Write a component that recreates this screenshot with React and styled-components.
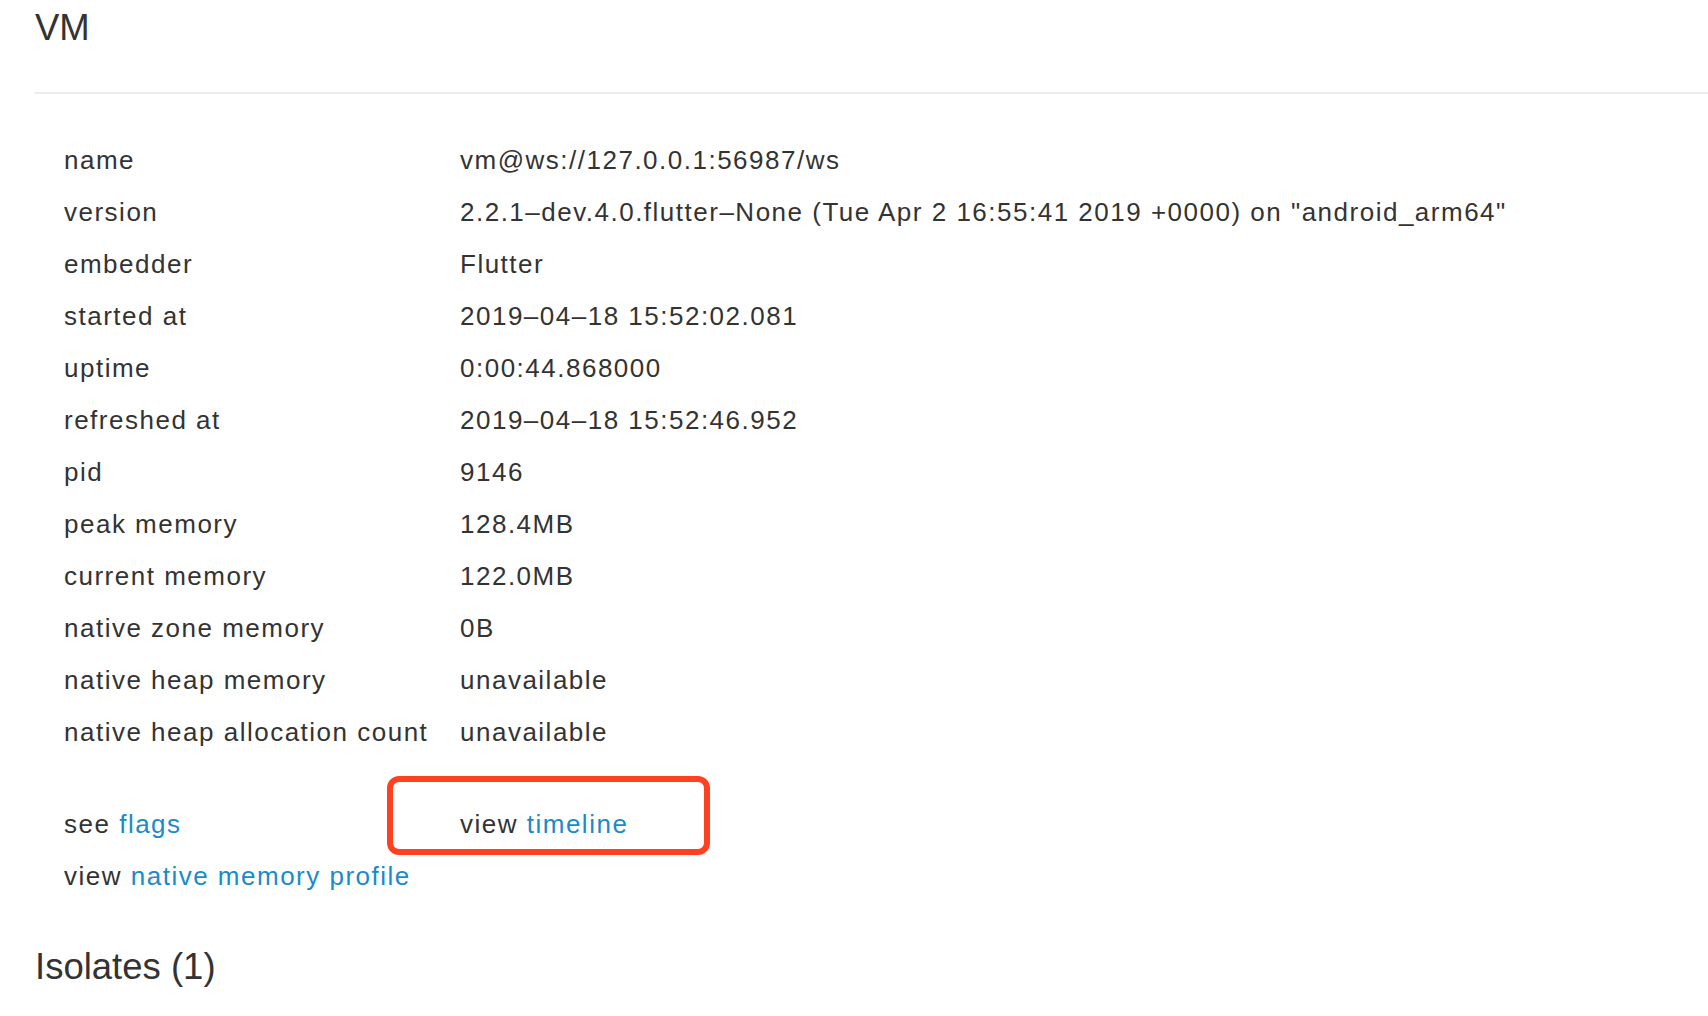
import React from "react";
import styled, { createGlobalStyle } from "styled-components";

const GlobalStyle = createGlobalStyle`
  html, body {
    margin: 0;
    padding: 0;
    background: #ffffff;
  }
  body {
    font-family: "Liberation Sans", Arial, sans-serif;
    color: #333333;
  }
`;

const Page = styled.div`
  padding: 10px 0 40px 35px;
`;

const Heading = styled.h1`
  margin: 0;
  font-size: 36.5px;
  line-height: 36px;
  font-weight: 400;
  color: #333333;
`;

const Rule = styled.hr`
  margin: ${(p) => p.$top}px 0 ${(p) => p.$bottom}px 0;
  border: 0;
  height: 2px;
  background: #ececec;
`;

const InfoGrid = styled.div`
  display: grid;
  grid-template-columns: 396px 1fr;
  padding-left: 29px;
  margin-top: ${(p) => p.$top || 0}px;
  font-size: 26px;
  letter-spacing: 1.5px;
  line-height: 52px;
`;

const Cell = styled.div`
  position: relative;
  white-space: nowrap;
  height: 52px;
`;

const Link = styled.a`
  color: #1a8bc9;
  text-decoration: none;
  cursor: pointer;
`;

const Highlight = styled.div`
  position: absolute;
  left: -73px;
  top: -22px;
  width: 323px;
  height: 79px;
  box-sizing: border-box;
  border: 6px solid #ff4120;
  border-radius: 12px;
  pointer-events: none;
`;

const SubHeading = styled(Heading)`
  margin-top: 47px;
`;

const rows = [
  ["name", "vm@ws://127.0.0.1:56987/ws"],
  [
    "version",
    '2.2.1\u2013dev.4.0.flutter\u2013None (Tue Apr 2 16:55:41 2019 +0000) on "android_arm64"',
  ],
  ["embedder", "Flutter"],
  ["started at", "2019\u201304\u201318 15:52:02.081"],
  ["uptime", "0:00:44.868000"],
  ["refreshed at", "2019\u201304\u201318 15:52:46.952"],
  ["pid", "9146"],
  ["peak memory", "128.4MB"],
  ["current memory", "122.0MB"],
  ["native zone memory", "0B"],
  ["native heap memory", "unavailable"],
  ["native heap allocation count", "unavailable"],
];

export default function App() {
  return (
    <>
      <GlobalStyle />
      <Page>
        <Heading>VM</Heading>
        <Rule $top={46} $bottom={40} />
        <InfoGrid>
          {rows.map(([label, value]) => (
            <React.Fragment key={label}>
              <Cell>{label}</Cell>
              <Cell>{value}</Cell>
            </React.Fragment>
          ))}
        </InfoGrid>
        <InfoGrid $top={40}>
          <Cell>
            see <Link>flags</Link>
          </Cell>
          <Cell>
            view <Link>timeline</Link>
            <Highlight />
          </Cell>
          <Cell>
            view <Link>native memory profile</Link>
          </Cell>
          <Cell />
        </InfoGrid>
        <SubHeading>Isolates (1)</SubHeading>
      </Page>
    </>
  );
}
